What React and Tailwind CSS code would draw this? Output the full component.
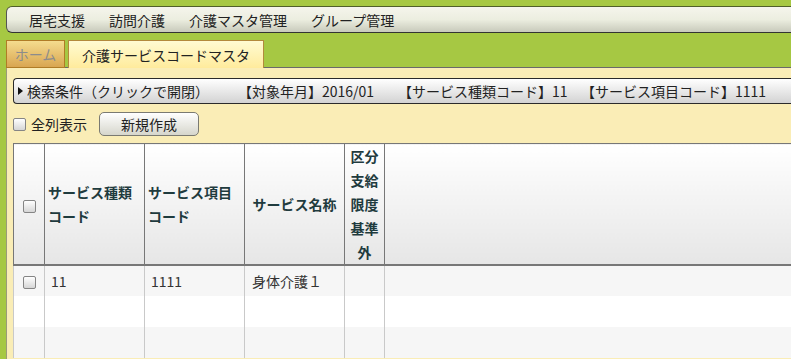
import React from "react";

function Check() {
  return (
    <span className="inline-block w-[13px] h-[13px] border border-[#858585] rounded-[2px] bg-linear-to-b from-white to-[#d6d6d6] align-middle" />
  );
}

export default function App() {
  const menus = ["居宅支援", "訪問介護", "介護マスタ管理", "グループ管理"];
  const rows = [
    { code: "11", item: "1111", name: "身体介護１" },
    null,
    null,
  ];

  return (
    <div className="w-[791px] h-[359px] overflow-hidden bg-[#a6c843] flex flex-col font-['Noto_Sans_CJK_JP',sans-serif] text-[14px] text-[#222]">
      {/* top menu */}
      <div className="pt-[6px] pl-[6px]">
        <div className="h-[27px] border-y border-l border-t-[#4f5f2a] border-b-[#333] border-l-[#555] rounded-l-[6px] bg-linear-to-b from-[#f5f5ec] via-[#eceee0] to-[#c8cabb] flex items-center pl-[22px] gap-[24px] leading-none">
          {menus.map((m) => (
            <span key={m}>{m}</span>
          ))}
        </div>
      </div>

      {/* tabs */}
      <div className="flex items-start gap-[3px] pl-[6px] mt-[7px] h-[27px] relative z-10">
        <div className="h-[28px] w-[59px] border border-[#b07c26] bg-linear-to-b from-[#f4dc8e] to-[#d9a651] text-[#8c8c8c] flex items-center justify-center leading-none">
          ホーム
        </div>
        <div className="h-[28px] px-[13px] border border-b-0 border-[#b38a3c] bg-linear-to-b from-[#fffbd2] to-[#ffeb9c] flex items-center leading-none">
          介護サービスコードマスタ
        </div>
      </div>

      {/* panel */}
      <div className="flex-1 ml-[6px] border-t border-l border-t-[#6a6a6a] border-l-[#9a9a7a] bg-[#faedb6] pl-[6px] pt-[10px]">
        <div className="h-[26px] border-y border-l border-[#2a2a2a] rounded-l-[4px] bg-linear-to-b from-white to-[#d3d3d3] flex items-center pl-[4px] leading-none whitespace-nowrap">
          <svg width="5" height="8" viewBox="0 0 5 8" className="mr-[4px]">
            <path d="M0 0 L5 4 L0 8 Z" fill="#111" />
          </svg>
          <span className="w-[211px]">検索条件（クリックで開閉）</span>
          <span className="w-[160px]">【対象年月】2016/01</span>
          <span className="w-[183px]">【サービス種類コード】11</span>
          <span>【サービス項目コード】1111</span>
        </div>

        <div className="mt-[8px] h-[24px] flex items-center leading-none">
          <Check />
          <span className="ml-[5px]">全列表示</span>
          <button className="ml-[12px] w-[100px] h-[24px] rounded-[5px] border border-[#7a7a72] bg-linear-to-b from-white to-[#d6d6cc] text-[14px] text-[#222]">
            新規作成
          </button>
        </div>

        <table className="mt-[7px] w-[1000px] table-fixed border-collapse bg-white">
          <colgroup>
            <col className="w-[31px]" />
            <col className="w-[100px]" />
            <col className="w-[100px]" />
            <col className="w-[100px]" />
            <col className="w-[40px]" />
            <col />
          </colgroup>
          <thead>
            <tr className="text-[#1f3b3e] font-bold leading-6">
              <th className="border border-b-2 border-[#777] bg-linear-to-b from-white to-[#e6e6e6] p-0 text-center">
                <Check />
              </th>
              <th className="border border-b-2 border-[#777] bg-linear-to-b from-white to-[#e6e6e6] py-0 pl-[3px] text-left font-bold">
                サービス種類
                <br />
                コード
              </th>
              <th className="border border-b-2 border-[#777] bg-linear-to-b from-white to-[#e6e6e6] py-0 pl-[3px] text-left font-bold">
                サービス項目
                <br />
                コード
              </th>
              <th className="border border-b-2 border-[#777] bg-linear-to-b from-white to-[#e6e6e6] py-0 text-center font-bold">
                サービス名称
              </th>
              <th className="border border-b-2 border-[#777] bg-linear-to-b from-white to-[#e6e6e6] p-0 text-center font-bold">
                区分
                <br />
                支給
                <br />
                限度
                <br />
                基準
                <br />
                外
              </th>
              <th className="border border-b-2 border-[#777] bg-linear-to-b from-white to-[#e6e6e6]" />
            </tr>
          </thead>
          <tbody>
            {rows.map((r, i) => (
              <tr key={i} className={i % 2 === 0 ? "h-[31px] bg-[#f6f6f6]" : "h-[31px] bg-white"}>
                <td className="border-x border-[#c9c9c9] text-center p-0">{r && <Check />}</td>
                <td className="border-x border-[#c9c9c9] pl-[6px] text-[#333]">{r && r.code}</td>
                <td className="border-x border-[#c9c9c9] pl-[6px] text-[#333]">{r && r.item}</td>
                <td className="border-x border-[#c9c9c9] pl-[7px] text-[#333]">{r && r.name}</td>
                <td className="border-x border-[#c9c9c9]" />
                <td className="border-x border-[#c9c9c9]" />
              </tr>
            ))}
          </tbody>
        </table>
      </div>
    </div>
  );
}
